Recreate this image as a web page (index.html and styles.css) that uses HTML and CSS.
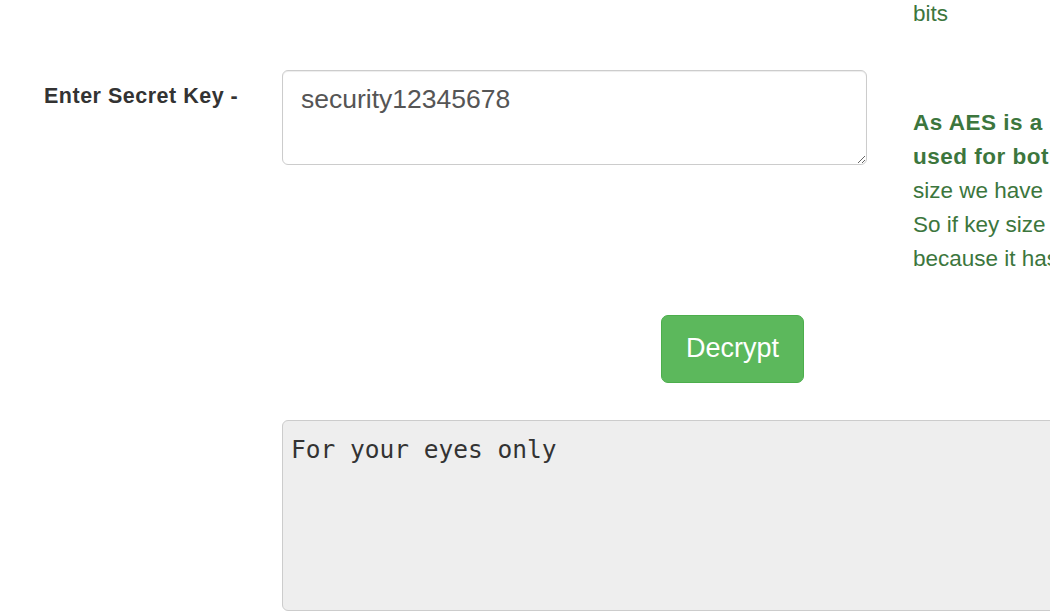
FILE: index.html
```html
<!DOCTYPE html>
<html lang="en">
<head>
<meta charset="utf-8">
<title>AES Decryption</title>
<link rel="stylesheet" href="styles.css">
</head>
<body>
<div class="page">
  <div class="top">
    <div class="form-col">
      <div class="form-row">
        <label class="label" for="key">Enter Secret Key -</label>
        <textarea id="key" class="field">security12345678</textarea>
      </div>
      <div class="btn-row">
        <button class="btn-success" type="button">Decrypt</button>
      </div>
    </div>
    <div class="aside">
      <p class="bits">bits</p>
      <p class="note"><strong>As AES is a symmetric encryption technique, the same secret key is</strong><br><strong>used for both encryption and decryption.</strong> Hence, depending on the key<br>size we have used, the secret key must be of the exact same length.<br>So if key size is 128 bits then the secret key must be of 16 characters<br>because it has to match the key size used during encryption.</p>
    </div>
  </div>
  <div class="output-row">
    <pre class="output">For your eyes only</pre>
  </div>
</div>
</body>
</html>
```
FILE: styles.css
```css
html, body {
  margin: 0;
  padding: 0;
  background: #fff;
}
body {
  width: 1050px;
  height: 616px;
  overflow: hidden;
  font-family: "Liberation Sans", Arial, sans-serif;
}
.page {
  width: 1400px;
}
.top {
  display: flex;
  height: 420px;
}
.form-col {
  width: 913px;
  flex: none;
}
.form-row {
  display: flex;
  margin-top: 70px;
}
.label {
  width: 238px;
  padding-left: 44px;
  padding-top: 14px;
  font-size: 21.5px;
  letter-spacing: 0.5px;
  font-weight: bold;
  color: #333;
  line-height: 24px;
}
.field {
  width: 585px;
  height: 95px;
  box-sizing: border-box;
  margin: 0;
  padding: 10px 18px;
  border: 1px solid #ccc;
  border-radius: 6px;
  font-family: "Liberation Sans", Arial, sans-serif;
  font-size: 26.5px;
  line-height: 36px;
  color: #555;
  resize: vertical;
  outline: none;
  box-shadow: inset 0 1px 1px rgba(0,0,0,.075);
}
.btn-row {
  display: flex;
  padding-left: 661px;
  margin-top: 150px;
}
.btn-success {
  width: 143px;
  height: 68px;
  box-sizing: border-box;
  background: #5cb85c;
  border: 1px solid #4cae4c;
  border-radius: 7px;
  color: #fff;
  font-family: "Liberation Sans", Arial, sans-serif;
  font-size: 27px;
  padding: 0 0 2px;
  cursor: pointer;
}
.aside {
  flex: none;
  width: 700px;
  color: #3c763d;
  font-size: 22.5px;
  line-height: 34px;
  white-space: nowrap;
}
.aside p {
  margin: 0;
}
.aside strong {
  letter-spacing: 0.5px;
}
.bits {
  margin-top: -3px !important;
}
.note {
  margin-top: 75px !important;
}
.output-row {
  padding-left: 282px;
}
.output {
  margin: 0;
  height: 191px;
  width: 900px;
  box-sizing: border-box;
  background: #eee;
  border: 1px solid #ccc;
  border-radius: 6px;
  padding: 12px 8px;
  font-family: "DejaVu Sans Mono", "Liberation Mono", monospace;
  font-size: 24.5px;
  line-height: 34px;
  color: #333;
}
```
